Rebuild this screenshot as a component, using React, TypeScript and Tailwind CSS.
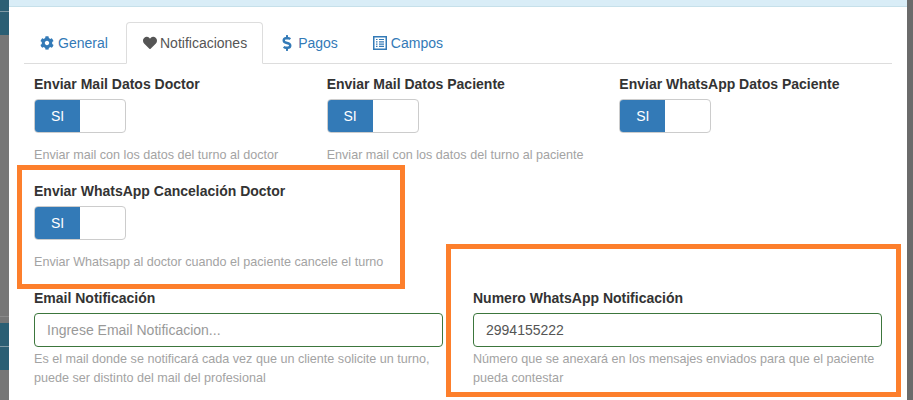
import React from 'react';
import { FaCog, FaHeart, FaDollarSign } from 'react-icons/fa';

const Switch: React.FC = () => (
  <div className="flex w-[92px] h-[34px] rounded border border-[#ccc] overflow-hidden bg-white">
    <div className="w-[45px] bg-[#337ab7] text-white flex items-center justify-center">SI</div>
  </div>
);

const SwitchField: React.FC<{ label: string; help: string }> = ({ label, help }) => (
  <div className="px-[15px]">
    <div className="font-bold text-[#333] h-5 leading-5 mb-[5px] whitespace-nowrap">{label}</div>
    <Switch />
    <div className="text-[12.6px] leading-[18px] text-[#a3a3a3] mt-[13px] mb-[17px] h-[18px] whitespace-nowrap">{help}</div>
  </div>
);

const InputField: React.FC<{ label: string; placeholder?: string; value?: string; help: string }> = ({
  label,
  placeholder,
  value,
  help,
}) => (
  <div className="px-[15px]">
    <div className="font-bold text-[#333] h-5 leading-5 mb-[5px]">{label}</div>
    <input
      readOnly
      value={value ?? ''}
      placeholder={placeholder}
      className="block w-full h-[34px] px-3 rounded border border-[#3c763d] bg-white text-[#555] placeholder:text-[#999] outline-none"
    />
    <div className="text-[12.6px] leading-[18.6px] text-[#a3a3a3] mt-[3px]">{help}</div>
  </div>
);

// the bootstrap list-alt glyph: a framed sheet with bullet rows
const ListAltIcon: React.FC = () => (
  <svg viewBox="0 0 14 14" className="w-[14px] h-[14px] ml-[3px]" fill="none" stroke="currentColor">
    <rect x="0.75" y="0.75" width="12.5" height="12.5" strokeWidth="1.5" />
    <path d="M3 3.5h1.5M6 3.5h5M3 5.8h1.5M6 5.8h5M3 8.1h1.5M6 8.1h5M3 10.4h1.5M6 10.4h5" strokeWidth="1.2" />
  </svg>
);

const Tab: React.FC<{ icon: React.ReactNode; label: string; active?: boolean; className?: string }> = ({
  icon,
  label,
  active,
  className,
}) =>
  active ? (
    <div className="flex items-center gap-[3px] h-[42px] pl-4 pr-[15px] -mb-px rounded-t bg-white border border-[#ddd] border-b-white text-[#555]">
      {icon}
      {label}
    </div>
  ) : (
    <div className={`flex items-center h-[42px] px-4 text-[#337ab7] ${className}`}>
      {icon}
      {label}
    </div>
  );

const StripTile: React.FC<{ className: string }> = ({ className }) => (
  <div className={`bg-[#2b5f74] flex flex-col items-center ${className}`}>
    <div className="h-[12px] w-full border-b border-[#7f9aa5]" />
  </div>
);

const App: React.FC = () => (
  <div
    className="relative flex w-[913px] h-[400px] overflow-hidden bg-white text-sm leading-5 text-[#333]"
    style={{ fontFamily: '"Liberation Sans", Arial, sans-serif' }}
  >
    {/* dimmed page behind the modal */}
    <div className="w-[9px] shrink-0 bg-[#777] flex flex-col">
      <StripTile className="h-[35px]" />
      <div className="h-[282px] border-b border-[#8a8a8a]" />
      <div className="h-[6px]" />
      <StripTile className="h-[47px] pt-[12px]" />
    </div>

    <div className="flex-1 min-w-0 bg-white">
      <div className="h-[7px] bg-[#d9edf7] border-b border-[#c6e0ea]" />
      <div className="px-[15px] pt-[15px]">
        <div className="flex h-[42px] border-b border-[#ddd]">
          <Tab className="gap-[4px] w-[102px]" icon={<FaCog className="w-[14px] h-[14px]" />} label="General" />
          <Tab active icon={<FaHeart className="w-[14px] h-[14px]" />} label="Notificaciones" />
          <Tab className="gap-[6px]" icon={<FaDollarSign className="w-[10px] h-[16px] ml-[3px]" />} label="Pagos" />
          <Tab className="gap-[4px]" icon={<ListAltIcon />} label="Campos" />
        </div>
        <div className="mx-[-5px] pt-[10px]">
          <div className="grid grid-cols-3">
            <SwitchField label="Enviar Mail Datos Doctor" help="Enviar mail con los datos del turno al doctor" />
            <SwitchField label="Enviar Mail Datos Paciente" help="Enviar mail con los datos del turno al paciente" />
            <SwitchField label="Enviar WhatsApp Datos Paciente" help="" />
            <SwitchField
              label="Enviar WhatsApp Cancelación Doctor"
              help="Enviar Whatsapp al doctor cuando el paciente cancele el turno"
            />
          </div>
          <div className="grid grid-cols-2">
            <InputField
              label="Email Notificación"
              placeholder="Ingrese Email Notificacion..."
              help="Es el mail donde se notificará cada vez que un cliente solicite un turno, puede ser distinto del mail del profesional"
            />
            <InputField
              label="Numero WhatsApp Notificación"
              value="2994155222"
              help="Número que se anexará en los mensajes enviados para que el paciente pueda contestar"
            />
          </div>
        </div>
      </div>
    </div>

    <div className="w-[6px] shrink-0 bg-[#6b6b6b]" />

    {/* orange highlight boxes drawn over the screenshot */}
    <div className="absolute left-[17px] top-[165px] w-[388px] h-[124px] border-[5px] border-[#fd7f2c]" />
    <div className="absolute left-[446px] top-[244px] w-[455px] h-[153px] border-[5px] border-[#fd7f2c]" />
  </div>
);

export default App;
